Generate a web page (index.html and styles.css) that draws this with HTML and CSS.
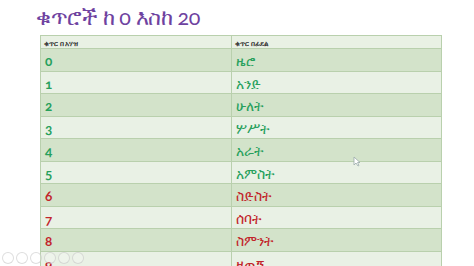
FILE: index.html
```html
<!DOCTYPE html>
<html>
<head>
<meta charset="utf-8">
<link rel="stylesheet" href="styles.css">
</head>
<body>
<div class="slide">
  <h1 class="title">ቁጥሮች ከ 0 እስከ 20</h1>
  <table class="numbers">
    <tr class="head"><td class="c1">ቁጥር በ አሃዝ</td><td class="c2">ቁጥር በፊደል</td></tr>
    <tr class="dark green"><td>0</td><td>ዜሮ</td></tr>
    <tr class="light green"><td>1</td><td>አንድ</td></tr>
    <tr class="dark green"><td>2</td><td>ሁለት</td></tr>
    <tr class="light green"><td>3</td><td>ሦሥት</td></tr>
    <tr class="dark green"><td>4</td><td>አራት</td></tr>
    <tr class="light green"><td>5</td><td>አምስት</td></tr>
    <tr class="dark red"><td>6</td><td>ስድስት</td></tr>
    <tr class="light red"><td>7</td><td>ሰባት</td></tr>
    <tr class="dark red"><td>8</td><td>ስምንት</td></tr>
    <tr class="light red"><td>9</td><td>ዘጠኝ</td></tr>
  </table>
  <div class="controls">
    <span class="ctl"></span><span class="ctl"></span><span class="ctl"></span><span class="ctl"></span><span class="ctl"></span><span class="ctl"></span>
  </div>
  <svg class="cursor" width="8" height="11" viewBox="0 0 8 11"><path d="M1 1 L1 9 L3 7 L5 10 L6 9.5 L4.5 6.5 L7 6.5 Z" fill="#fff" stroke="#9aa" stroke-width="0.8"/></svg>
</div>
</body>
</html>
```
FILE: styles.css
```css
html, body {
  margin: 0;
  padding: 0;
  background: #fff;
  overflow: hidden;
}
.slide {
  position: relative;
  width: 474px;
  height: 266px;
  overflow: hidden;
}
.title {
  margin: 0;
  padding: 4px 0 0 36px;
  height: 31px;
  box-sizing: border-box;
  font-family: "Lato", "Liberation Sans", sans-serif;
  font-variant-numeric: oldstyle-nums;
  font-weight: normal;
  font-size: 21.5px;
  letter-spacing: -0.4px;
  line-height: 27px;
  color: #6e42a0;
}
.numbers {
  margin: 4px 0 0 40px;
  width: 402px;
  border-collapse: collapse;
  font-family: "Lato", "Liberation Sans", sans-serif;
  font-variant-numeric: oldstyle-nums;
  table-layout: fixed;
}
.numbers td {
  border: 1px solid #b9d0ad;
  padding: 3px 0 0 4px;
  height: 18.5px;
  font-size: 14px;
  line-height: 18px;
  font-weight: normal;
  vertical-align: middle;
}
.numbers td:first-child {
  font-weight: bold;
  font-size: 13.5px;
}
.numbers .c1 { width: 187px; }
.head td,
.numbers .head td:first-child {
  height: 11px;
  padding: 1px 0 0 3px;
  font-size: 7px;
  line-height: 10px;
  background: #e9f1e4;
  color: #333;
  font-weight: bold;
}
.dark td { background: #d3e3ca; }
.light td { background: #e9f1e5; }
.green td { color: #27a05c; }
.red td { color: #c2252b; }
.controls {
  position: absolute;
  left: 2px;
  top: 252px;
  display: flex;
  gap: 2px;
}
.ctl {
  width: 10px;
  height: 10px;
  border: 1px solid rgba(190,190,190,0.5);
  border-radius: 50%;
  background: rgba(255,255,255,0.25);
}
.cursor {
  position: absolute;
  left: 353px;
  top: 156px;
}
```
